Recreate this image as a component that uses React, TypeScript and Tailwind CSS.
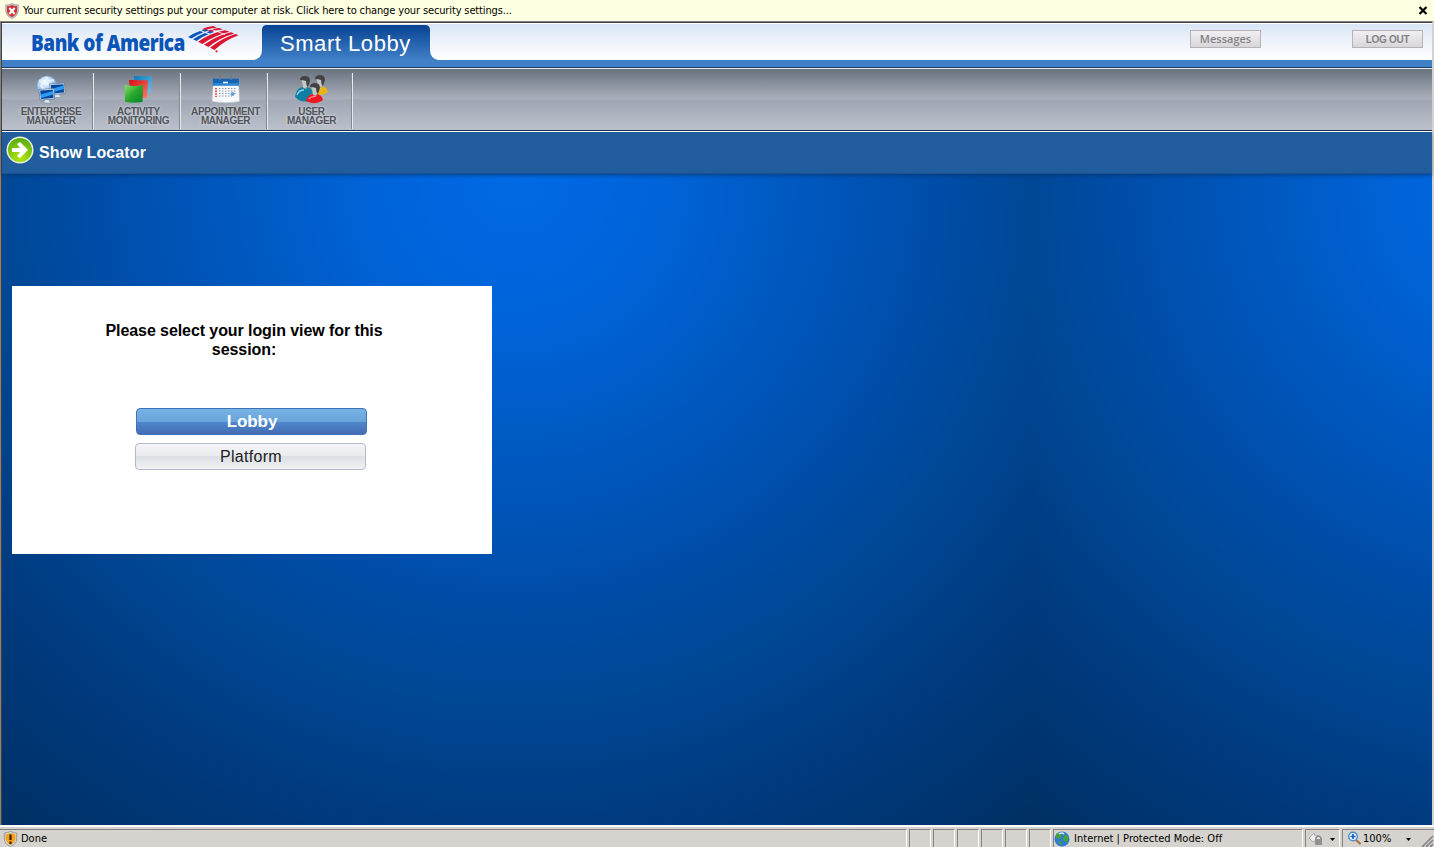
import React from "react";

const tahoma = "font-['DejaVu_Sans_Condensed','DejaVu_Sans',sans-serif] [font-stretch:condensed]";
const arial = "font-['Liberation_Sans',Arial,sans-serif]";

function ShieldX() {
  return (
    <svg width="14" height="16" viewBox="0 0 14 16">
      <path d="M7 .5 Q10 2 13.2 2 V8 Q13 13 7 15.5 Q1 13 .8 8 V2 Q4 2 7 .5Z" fill="#c9c9c9" stroke="#8c8c8c" strokeWidth=".7" />
      <path d="M7 2 Q9.500 3.200 12 3.200 V8 Q11.700 12 7 14 Q2.300 12 2 8 V3.200 Q4.500 3.200 7 2Z" fill="#cf3338" />
      <path d="M4.300 5 L9.700 11 M9.700 5 L4.300 11" stroke="#fff" strokeWidth="2" />
    </svg>
  );
}

function FlagLogo() {
  return (
    <svg width="51" height="28" viewBox="0 0 51 28">
      <g fill="#0c55b8">
        <path d="M0 11 Q6 7 12 5 L15.500 6.200 Q9 8.700 3.500 12.600Z" />
        <path d="M5 13.200 Q11 9.200 17 6.900 L20.500 8.200 Q14 10.600 8.500 14.900Z" />
        <path d="M13.300 4.300 L17.500 2.900 L21 4.200 L17 5.700Z" />
        <path d="M18.500 6.200 L22.500 4.800 L26 6 L22 7.600Z" />
      </g>
      <g fill="#dc1431">
        <path d="M14 3 Q20 .5 25 0 L29 1.400 Q22 2 17.500 4Z" />
        <path d="M20 4.500 Q26 2.600 31 2.100 L35 3.500 Q29 4 23.500 5.800Z" />
        <path d="M10 15.700 Q22 7.200 37 4.200 L41.500 5.800 Q27 9 14.500 18Z" />
        <path d="M16 18.800 Q29 9.500 43 6.300 L46.300 7.500 Q32 11.500 20.500 21Z" />
        <path d="M22 21.800 Q34 12 47.500 8 L50.500 9.200 Q37 14 26.500 24Z" />
        <circle cx="28.500" cy="25.300" r="1.100" />
      </g>
      <path d="M23 3.200 L37 8.500" stroke="#fff" strokeWidth=".8" />
    </svg>
  );
}

function Monitor({ x, y }: { x: number; y: number }) {
  return (
    <g transform={`translate(${x} ${y})`}>
      <path d="M5.500 11 h4 l2.500 3.500 h-7z" fill="#dbe6ef" stroke="#6f859c" strokeWidth=".5" />
      <path d="M0 1 L15 0 L15.500 10.500 L1 11.500Z" fill="#dce9f5" stroke="#46688d" strokeWidth=".6" />
      <path d="M1.200 2 L14 1.200 L14.500 9.500 L2 10.400Z" fill="#06469c" />
      <path d="M1.700 6 L14.200 2.500 L14.400 6 L2 9.500Z" fill="#2e9af0" />
    </g>
  );
}

function EnterpriseIcon() {
  return (
    <svg width="32" height="30" viewBox="0 0 32 30">
      <defs>
        <radialGradient id="globe" cx=".4" cy=".3" r=".7">
          <stop offset="0" stopColor="#fff" /><stop offset=".6" stopColor="#a4c9ef" /><stop offset="1" stopColor="#4d88cb" />
        </radialGradient>
      </defs>
      <circle cx="12" cy="11" r="10" fill="url(#globe)" stroke="#79a6d6" strokeWidth=".6" />
      <path d="M4 5 Q9 8 6 11 L10 15 M11 2 L14 6 L19 5 M9 8 L15 10" stroke="#e9f4ff" strokeWidth="2" fill="none" opacity=".8" />
      <Monitor x={14.5} y={8} />
      <Monitor x={4} y={13.5} />
    </svg>
  );
}

function ActivityIcon() {
  return (
    <svg width="30" height="30" viewBox="0 0 30 30">
      <defs>
        <linearGradient id="gr" x2="1" y2="1"><stop stopColor="#8be06f" /><stop offset=".5" stopColor="#27a72c" /><stop offset="1" stopColor="#08822d" /></linearGradient>
        <linearGradient id="rd" x2="1" y2="1"><stop stopColor="#d70b13" /><stop offset="1" stopColor="#ff7a69" /></linearGradient>
        <linearGradient id="bl" x2="1" y2="1"><stop stopColor="#087abd" /><stop offset="1" stopColor="#6bc5ee" /></linearGradient>
      </defs>
      <path d="M10 1 L28 1.500 L26.500 18 L11 18Z" fill="url(#bl)" />
      <path d="M5 5 L24 5.500 L23 23 L7 22Z" fill="url(#rd)" />
      <path d="M.5 10 Q10 12 19 10 L18.500 27 Q9 28.500 1 27Z" fill="url(#gr)" />
    </svg>
  );
}

function CalendarIcon() {
  return (
    <svg width="30" height="30" viewBox="0 0 30 30">
      <path d="M2.500 4 H27.500 L28.500 26.500 Q15 29 1 26.500Z" fill="#f6f8fa" stroke="#bac1c9" strokeWidth=".6" />
      <path d="M2 3.500 H28 V10.500 H1.600Z" fill="#1665b5" /><path d="M2 8 H28 V10.500 H1.700Z" fill="#2b84d4" />
      <path d="M9 0 V5 M20 0 V5" stroke="#707880" strokeWidth="1.500" />
      <path d="M12 7.500 H17" stroke="#fff" strokeWidth="1.500" />
      <path d="M8 13.500 H25 M8 16 H25 M8 18.500 H25 M8 21 H21" stroke="#8295a5" strokeWidth="1.200" strokeDasharray="1.500 1.500" />
      <path d="M5 13 V22" stroke="#e34646" strokeWidth="1.800" strokeDasharray="1.600 1" />
      <circle cx="21.500" cy="19" r="2" fill="#61a3df" />
    </svg>
  );
}

function Person({ x, y, color }: { x: number; y: number; color: string }) {
  return (
    <g transform={`translate(${x} ${y})`}>
      <path d="M-1 18 Q0 12.500 5 11 L10 11 Q15 12 16 17 Q9 23 -1 18Z" fill={color} />
      <path d="M1.500 16 Q5 12.500 9 13.500" fill="none" stroke="#fff" strokeWidth="1.200" opacity=".5" />
      <path d="M4 3 L10 3 L11 9 L9 13 L6 12Z" fill="#c4c6c8" stroke="#777" strokeWidth=".4" />
      <path d="M3 4 Q3 0 8 0 Q13 0 13 5 L11 11 L9.500 9 L9 5 Q6 4 3 4Z" fill="#444343" />
    </g>
  );
}

function UsersIcon() {
  return (
    <svg width="34" height="32" viewBox="0 0 34 32">
      <Person x={17} y={0} color="#e9b415" />
      <Person x={2} y={1} color="#12809f" />
      <path d="M0 22 Q1 15 6 13 L15 15 L14 26 Q6 28 0 22Z" fill="#0e7fa4" />
      <path d="M2 20 Q4 15 9 15" fill="none" stroke="#8fd0e4" strokeWidth="1.300" />
      <Person x={12} y={8} color="#ee1722" />
    </svg>
  );
}

function ToolItem({ icon, a, b, w }: { icon: React.ReactNode; a: string; b: string; w: string }) {
  return (
    <div className={`${w} flex h-[61px] flex-col items-center pt-[6px]`}>
      <div className="flex h-[32px] items-start justify-center">{icon}</div>
      <div className={`${arial} text-center text-[10px] leading-[9px] font-bold tracking-[-0.35px] whitespace-nowrap text-[#505359] [text-shadow:0_0_3px_#ffffffb0]`}>
        {a}<br />{b}
      </div>
    </div>
  );
}

const Divider = () => <div className="mt-[4px] h-[56px] w-[2px] border-l border-[#838991] bg-[#e6e9ee]" />;
const well = "h-[18px] border-t border-l border-[#848284] border-r border-r-white";

export default function App() {
  return (
    <div className="flex h-[847px] w-[1434px] flex-col overflow-hidden bg-[#d6d3ce]">
      <div className={`flex h-[21px] shrink-0 items-center bg-[#ffffe1] pr-[6px] pl-[5px] ${tahoma} text-[11px] text-black`}>
        <ShieldX />
        <span className="mt-[2px] ml-[4px] tracking-[-0.135px] whitespace-nowrap">Your current security settings put your computer at risk. Click here to change your security settings...</span>
        <svg className="ml-auto" width="10" height="9" viewBox="0 0 10 9"><path d="M1.500 1 L8.500 8 M8.500 1 L1.500 8" stroke="#000" strokeWidth="2.200" /></svg>
      </div>
      <div className="flex min-h-0 flex-1 flex-col border-t border-r-2 border-l border-t-[#848284] border-r-[#d6d3ce] border-l-[#848284]">
        <div className="flex min-h-0 flex-1 flex-col border-t border-l border-[#424142]">
          <header className="flex h-[37px] shrink-0 items-start border-t border-white bg-linear-to-b from-[#d9e5f5] via-[#eef3fb] to-white">
            <div className="flex h-[36px] w-[252px] pt-[2px] pl-[29px]">
              <span className="w-[157px] origin-left scale-x-[0.865] font-['Open_Sans','Liberation_Sans',sans-serif] text-[22px] leading-[33px] font-extrabold tracking-[-0.6px] whitespace-nowrap text-[#0c55b8]">Bank of America</span>
              <FlagLogo />
            </div>
            <div className="relative h-[36px] w-[184px]">
              <svg className="absolute top-0 left-0" width="184" height="36" viewBox="0 0 184 36">
                <defs><linearGradient id="tab" x2="0" y2="1"><stop stopColor="#084292" /><stop offset="1" stopColor="#4080c8" /></linearGradient></defs>
                <path d="M0 36 Q8 34 8 26 V6 Q8 1 13 1 H171 Q176 1 176 6 V26 Q176 34 184 36Z" fill="url(#tab)" />
              </svg>
              <div className={`relative pl-[26px] ${arial} text-[22px] leading-[39px] tracking-[0.55px] whitespace-nowrap text-white`}>Smart Lobby</div>
            </div>
            <div className="mt-[6px] ml-[752px] flex h-[18px] w-[71px] items-center justify-center border border-[#b5b3b8] bg-linear-to-b from-[#f1eff1] to-[#d8d6d9] font-['Open_Sans','DejaVu_Sans',sans-serif] text-[11px] font-semibold text-[#858388]">Messages</div>
            <div className={`mt-[6px] ml-[91px] flex h-[18px] w-[71px] shrink-0 items-center justify-center border border-[#b5b3b8] bg-linear-to-b from-[#f1eff1] to-[#d8d6d9] pt-px ${arial} text-[10px] font-bold tracking-[-0.3px] text-[#858388]`}>LOG OUT</div>
          </header>
          <div className="h-[8px] shrink-0 border-b border-[#1d3d63] bg-[#4080c8]" />
          <nav className="flex h-[63px] shrink-0 border-t border-[#e6e9ee] bg-[linear-gradient(#68727f_0,#aab0bb_48%,#9fa6b3_50%,#bcc1cc_100%)]">
            <ToolItem icon={<EnterpriseIcon />} a="ENTERPRISE" b="MANAGER" w="w-[90px] pl-[8px]" />
            <Divider />
            <ToolItem icon={<ActivityIcon />} a="ACTIVITY" b="MONITORING" w="w-[85px] pl-[4px]" />
            <Divider />
            <ToolItem icon={<CalendarIcon />} a="APPOINTMENT" b="MANAGER" w="w-[85px] pl-[4px]" />
            <Divider />
            <ToolItem icon={<UsersIcon />} a="USER" b="MANAGER" w="w-[83px] pl-[4px]" />
            <Divider />
          </nav>
          <div className="z-10 flex h-[43px] shrink-0 items-center border-t border-b border-t-white border-b-[#1b5190] bg-[#215c9c] pl-[4px] shadow-[0_-1px_0_#17304d,0_2px_3px_#00306480]">
            <svg className="-mt-[5px]" width="28" height="28" viewBox="0 0 28 28">
              <defs><radialGradient id="go" cx=".5" cy=".85" r=".8"><stop stopColor="#b8e80d" /><stop offset="1" stopColor="#5cae12" /></radialGradient></defs>
              <circle cx="14" cy="14" r="13.500" fill="#e7f2df" /><circle cx="14" cy="14" r="12" fill="url(#go)" />
              <path d="M6 12 H14 L11 8 L14 6 L22 14 L14 22 L11 20 L14 16 H6Z" fill="#fff" />
            </svg>
            <span className={`ml-[5px] ${arial} text-[16px] font-bold tracking-[0.1px] text-white`}>Show Locator</span>
          </div>
          <main className="min-h-0 flex-1 bg-[radial-gradient(circle_at_514px_5px,#006ae4_0,#0066df_86px,#0062d5_162px,#0059c1_273px,#004da8_421px,#004896_514px,#003b80_647px,#003064_825px)] bg-[length:1028px_100%] bg-repeat-x pt-[112px] pl-[10px]">
            <section className={`flex h-[268px] w-[480px] flex-col bg-white pt-[35px] ${arial}`}>
              <h1 className="ml-[80px] w-[304px] text-center text-[16px] leading-[19px] font-bold tracking-[-0.08px] text-black">Please select your login view for this session:</h1>
              <button className="mt-[49px] ml-[124px] h-[27px] w-[231px] rounded-[4px] border border-[#3d74b8] bg-[linear-gradient(#76b2e3,#69a5db_50%,#4e88ca_52%,#456bb5)] pl-px text-[17px] leading-[26px] font-bold tracking-[-0.1px] text-white">Lobby</button>
              <button className="mt-[8px] ml-[123px] h-[27px] w-[231px] rounded-[4px] border border-[#b5bac8] bg-[linear-gradient(#f5f5f8,#e9ebef_48%,#dbe0e4_50%,#f0f1f4)] pl-px text-[16px] leading-[25px] tracking-[0.3px] text-[#222]">Platform</button>
            </section>
          </main>
        </div>
      </div>
      <footer className={`flex h-[22px] shrink-0 border-t-2 border-white bg-[#d6d3ce] pt-[2px] ${tahoma} text-[11px] text-black`}>
        <div className={`${well} flex w-[907px] items-center gap-[3px] border-l-0 pl-[3px]`}>
          <svg width="15" height="16" viewBox="0 0 14 16"><path d="M7 .5 Q10 2 13.200 2 V8 Q13 13 7 15.500 Q1 13 .8 8 V2 Q4 2 7 .5Z" fill="#ddd" stroke="#888" strokeWidth=".8" /><path d="M7 2 L12 3.500 V8 Q11 12 7 14 Q3 12 2 8 V3.500Z" fill="#f4a31c" /><path d="M7 3.500 V9 M7 10.500 V13" stroke="#3c1c00" strokeWidth="2.200" /></svg>
          <span className="mt-px">Done</span>
        </div>
        {[0, 1, 2, 3, 4, 5].map((i) => <div key={i} className={`${well} ml-[2px] w-[22px]`} />)}
        <div className={`${well} ml-[2px] flex w-[250px] items-center gap-[4px]`}>
          <svg width="16" height="16" viewBox="0 0 16 16"><circle cx="8" cy="8" r="7.500" fill="#2f7bd3" /><path d="M2 3 Q7 0 8 3 L6 8 L2 7Z M10 3 L15 6 L13 12 L9 9Z M4 10 L8 11 L7 15Z" fill="#43a23c" /><path d="M5 3 Q8 1 10 3" stroke="#d8f0ff" strokeWidth="1.500" fill="none" /></svg>
          <span className="mt-px tracking-[0.02px] whitespace-nowrap">Internet | Protected Mode: Off</span>
        </div>
        <div className={`${well} ml-[2px] flex w-[35px] items-center pl-[2px]`}>
          <svg width="30" height="16" viewBox="0 0 30 16"><path d="M1 7 L6 2 L7 5 Q13 3 13 9 H8 L5 11Z" fill="#eee" stroke="#aaa" /><path d="M8 9 V7 Q10.500 3.500 13 7 V9" stroke="#888" fill="none" strokeWidth="1.500" /><rect x="7" y="8" width="7" height="6" fill="#909090" /><path d="M22 7 H27 L24.500 10Z" fill="#000" /></svg>
        </div>
        <div className={`${well} ml-[2px] flex flex-1 items-center border-r-0 pl-[4px]`}>
          <svg width="16" height="16" viewBox="0 0 16 16"><path d="M9 9 L13.500 13" stroke="#a86e3a" strokeWidth="2.200" /><circle cx="6" cy="5.500" r="4.300" fill="#edf7ff" stroke="#4a8dd0" strokeWidth="1.500" /><path d="M3.500 5.500 H8.500 M6 3 V8" stroke="#1862bd" strokeWidth="1.700" /></svg>
          <span className="mt-px">100%</span>
          <svg className="ml-auto" width="29" height="16" viewBox="0 0 29 16"><path d="M1 7 H6 L3.500 10Z" fill="#000" /><path d="M17 16 L28 5 M21 16 L28 9 M25 16 L28 13" stroke="#848284" strokeWidth="1.700" /></svg>
        </div>
      </footer>
    </div>
  );
}
